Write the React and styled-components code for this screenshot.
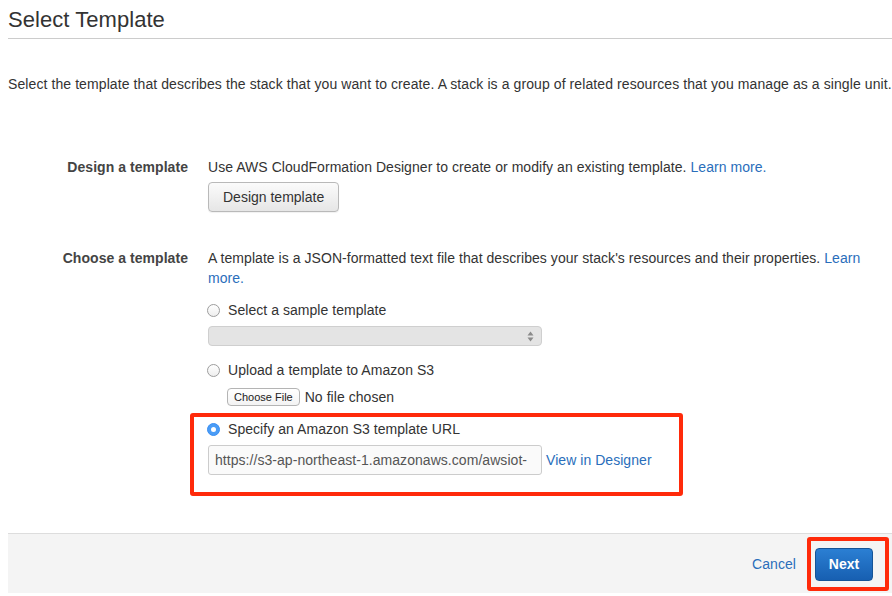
import React from "react";
import styled, { createGlobalStyle } from "styled-components";

const GlobalStyle = createGlobalStyle`
	html, body {
		margin: 0;
		padding: 0;
		background: #ffffff;
	}
	body {
		font-family: "Liberation Sans", Arial, sans-serif;
		font-size: 14px;
		letter-spacing: 0.05px;
		color: #333333;
		overflow: hidden;
	}
`;

const Page = styled.div`
	width: 892px;
	height: 596px;
	padding-left: 8px;
	box-sizing: border-box;
`;

const Header = styled.div`
	padding-top: 8px;
	padding-bottom: 6px;
	border-bottom: 1px solid #cccccc;
`;

const Title = styled.h1`
	margin: 0;
	font-size: 22px;
	line-height: 24px;
	font-weight: 400;
	color: #333333;
`;

const Intro = styled.p`
	margin: 35px 0 0;
	line-height: 20px;
	letter-spacing: 0.09px;
	color: #333333;
	white-space: nowrap;
`;

const FormRow = styled.div`
	display: grid;
	grid-template-columns: 180px 1fr;
	column-gap: 20px;
	margin-top: ${(props) => props.top}px;
`;

const Label = styled.div`
	text-align: right;
	font-weight: 700;
	line-height: 20px;
	color: #444444;
`;

const Field = styled.div`
	display: flex;
	flex-direction: column;
	align-items: flex-start;
	padding-right: 20px;
`;

const Text = styled.div`
	line-height: 20px;
	color: #333333;
`;

const Link = styled.a`
	color: #2a6ebb;
	text-decoration: none;
	cursor: pointer;
`;

const GrayButton = styled.button`
	margin-top: 5px;
	height: 30px;
	padding: 0 14px;
	font-family: inherit;
	font-size: 14px;
	color: #333333;
	background: linear-gradient(#fbfbfb, #e6e6e6);
	border: 1px solid #b9b9b9;
	border-radius: 4px;
	box-shadow: 0 1px 1px rgba(0, 0, 0, 0.06);
`;

const OptionLine = styled.label`
	display: flex;
	align-items: center;
	gap: 8px;
	height: 20px;
	margin-top: ${(props) => props.top || 0}px;
	line-height: 20px;
	color: #333333;
`;

const Radio = styled.span`
	width: 13px;
	height: 13px;
	box-sizing: border-box;
	border-radius: 50%;
	border: 1px solid ${(props) => (props.checked ? "#3a8ff2" : "#9d9d9d")};
	background: ${(props) =>
		props.checked ? "#4a9cf6" : "linear-gradient(#ffffff, #eeeeee)"};
	display: flex;
	align-items: center;
	justify-content: center;
	margin-left: -1px;

	&::after {
		content: "";
		display: ${(props) => (props.checked ? "block" : "none")};
		width: 5px;
		height: 5px;
		border-radius: 50%;
		background: #ffffff;
	}
`;

const SelectBox = styled.div`
	margin-top: 6px;
	width: 334px;
	height: 20px;
	box-sizing: border-box;
	background: #e4e4e4;
	border: 1px solid #cfcfcf;
	border-radius: 4px;
	display: flex;
	justify-content: flex-end;
	align-items: center;
	padding-right: 7px;
`;

const FileRow = styled.div`
	display: flex;
	align-items: center;
	gap: 5px;
	margin-top: 7px;
	margin-left: 19px;
	height: 20px;
`;

const FileButton = styled.button`
	height: 18px;
	padding: 0 6px;
	font-family: inherit;
	font-size: 11px;
	color: #222222;
	background: linear-gradient(#ffffff, #f3f3f3);
	border: 1px solid #b4b4b4;
	border-radius: 4px;
`;

const Highlight = styled.div`
	margin-top: 6px;
	margin-left: -18px;
	width: 493px;
	box-sizing: border-box;
	border: 4px solid #ff2a0a;
	border-radius: 3px;
	padding: 2px 14px 17px 14px;
`;

const UrlRow = styled.div`
	display: flex;
	align-items: center;
	gap: 4px;
	margin-top: 6px;
`;

const UrlInput = styled.div`
	width: 334px;
	height: 30px;
	box-sizing: border-box;
	border: 1px solid #cccccc;
	border-radius: 3px;
	background: #fafafa;
	padding: 0 6px;
	line-height: 28px;
	color: #555555;
	white-space: nowrap;
	overflow: hidden;
`;

const Footer = styled.div`
	margin-top: 37px;
	height: 60px;
	box-sizing: border-box;
	border-top: 1px solid #dddddd;
	background: #f4f4f4;
	display: flex;
	justify-content: flex-end;
	align-items: center;
	padding-right: 3px;
`;

const CancelLink = styled(Link)`
	margin-right: 11px;
`;

const NextFrame = styled.div`
	border: 4px solid #ff2a0a;
	border-radius: 3px;
	padding: 7px 12px 6px 4px;
	background: #f4f4f4;
`;

const PrimaryButton = styled.button`
	width: 58px;
	height: 33px;
	font-family: inherit;
	font-size: 14px;
	font-weight: 700;
	color: #ffffff;
	background: linear-gradient(#2b7fd3, #175fb1);
	border: 1px solid #155497;
	border-radius: 4px;
	display: block;
`;

function UpDown() {
	return (
		<svg width="7" height="11" viewBox="0 0 7 11">
			<path d="M3.5 0.5 L6.5 4.5 H0.5 Z" fill="#8a8a8a" />
			<path d="M3.5 10.5 L6.5 6.5 H0.5 Z" fill="#8a8a8a" />
		</svg>
	);
}

export default function App() {
	return (
		<>
			<GlobalStyle />
			<Page>
				<Header>
					<Title>Select Template</Title>
				</Header>
				<Intro>
					Select the template that describes the stack that you want to create. A stack is a group of related resources that you manage as a single unit.
				</Intro>

				<FormRow top={63}>
					<Label>Design a template</Label>
					<Field>
						<Text>
							Use AWS CloudFormation Designer to create or modify an existing template. <Link>Learn more.</Link>
						</Text>
						<GrayButton>Design template</GrayButton>
					</Field>
				</FormRow>

				<FormRow top={36}>
					<Label>Choose a template</Label>
					<Field>
						<Text>
							A template is a JSON-formatted text file that describes your stack's resources and their properties. <Link>Learn more.</Link>
						</Text>

						<OptionLine top={12}>
							<Radio />
							Select a sample template
						</OptionLine>
						<SelectBox>
							<UpDown />
						</SelectBox>

						<OptionLine top={14}>
							<Radio />
							Upload a template to Amazon S3
						</OptionLine>
						<FileRow>
							<FileButton>Choose File</FileButton>
							<Text>No file chosen</Text>
						</FileRow>

						<Highlight>
							<OptionLine>
								<Radio checked />
								Specify an Amazon S3 template URL
							</OptionLine>
							<UrlRow>
								<UrlInput>https://s3-ap-northeast-1.amazonaws.com/awsiot-</UrlInput>
								<Link>View in Designer</Link>
							</UrlRow>
						</Highlight>
					</Field>
				</FormRow>

				<Footer>
					<CancelLink>Cancel</CancelLink>
					<NextFrame>
						<PrimaryButton>Next</PrimaryButton>
					</NextFrame>
				</Footer>
			</Page>
		</>
	);
}
